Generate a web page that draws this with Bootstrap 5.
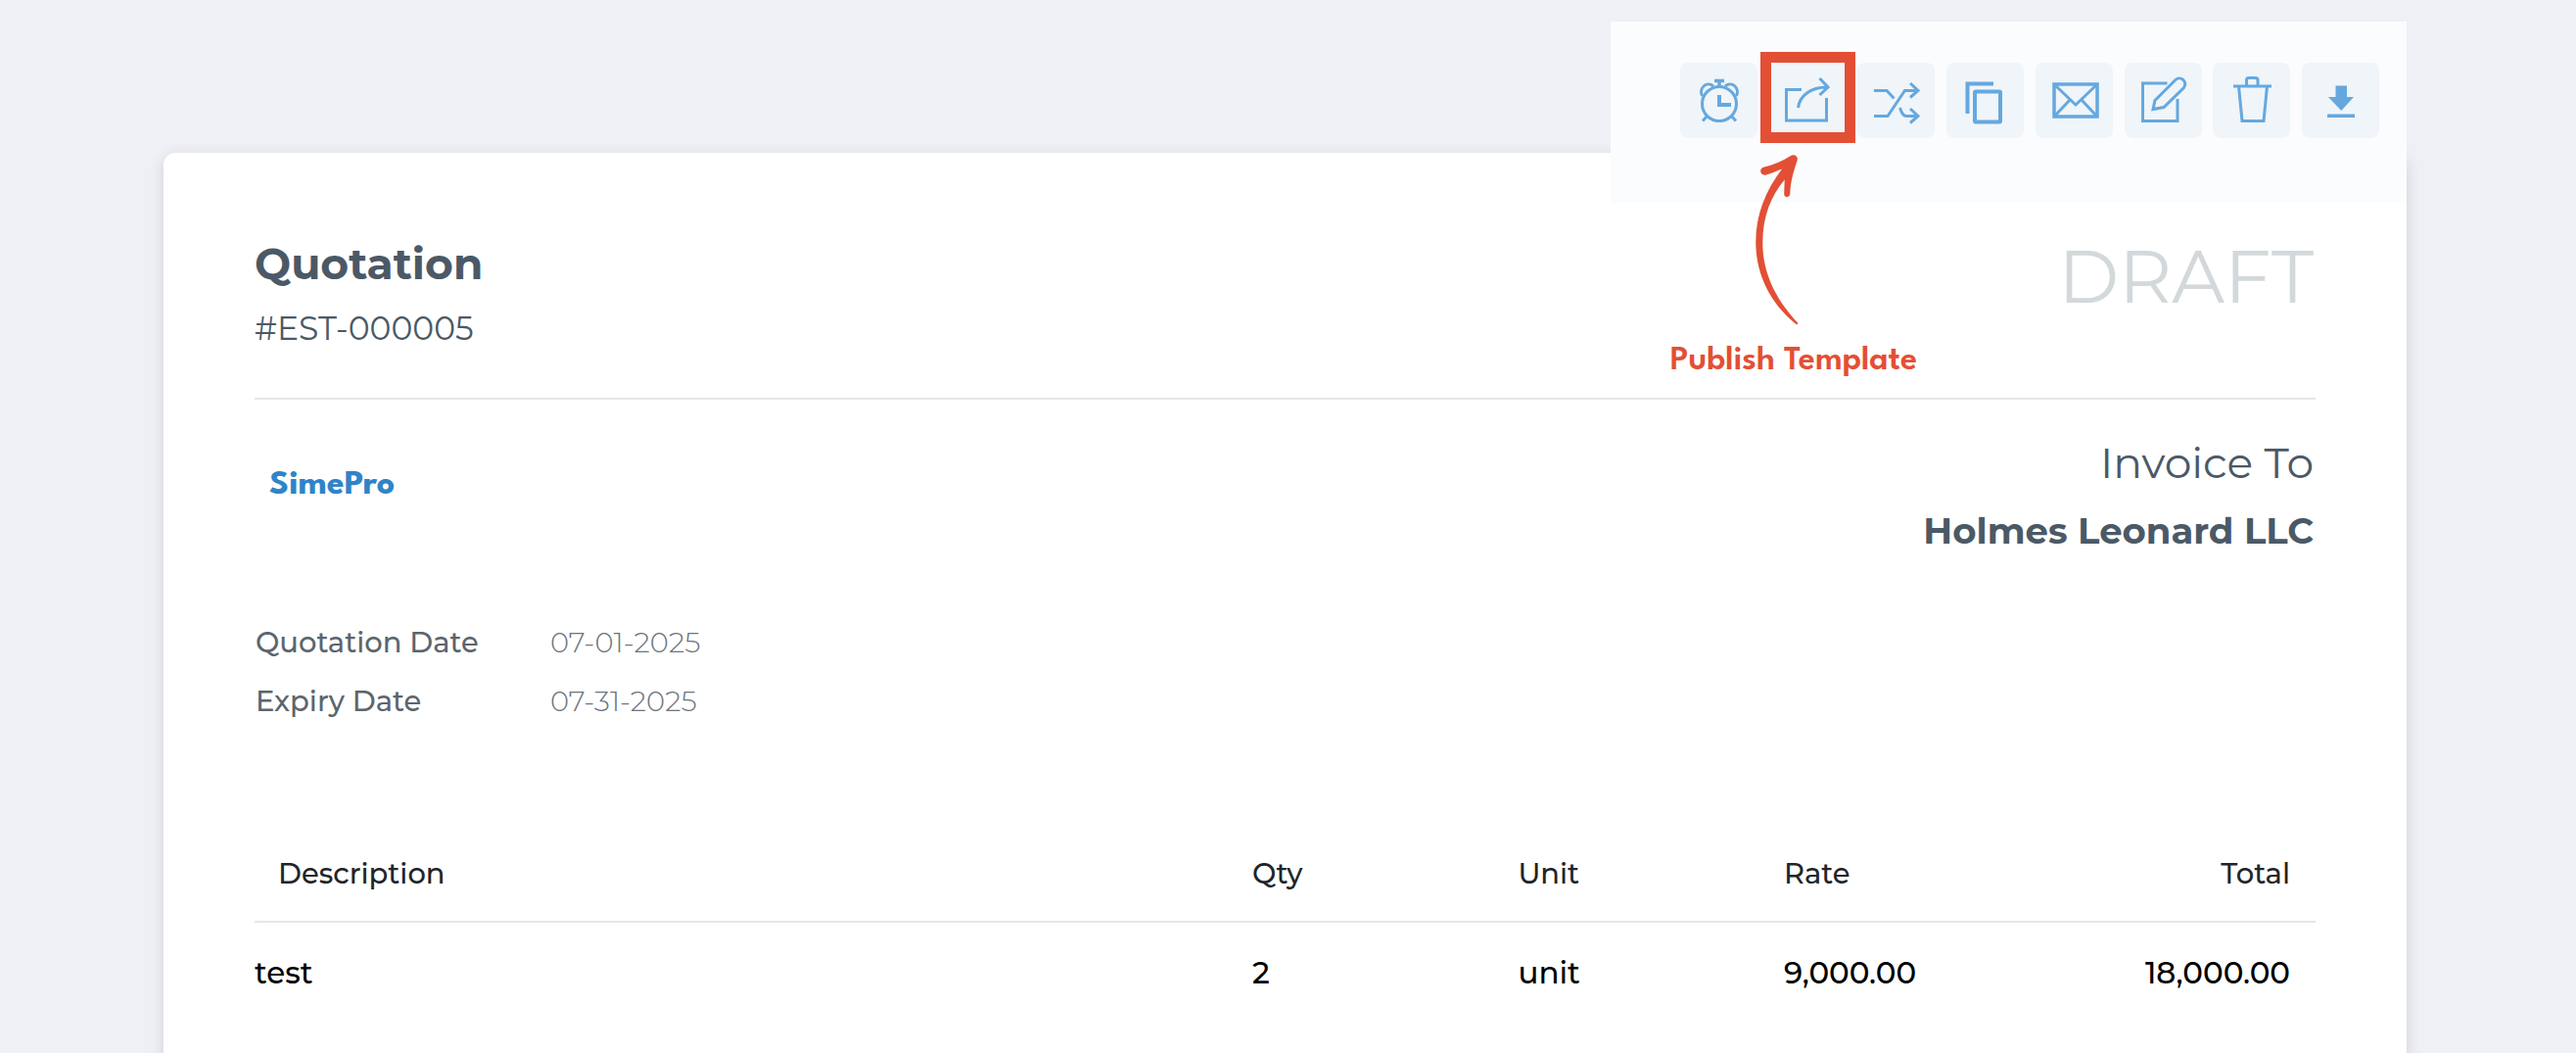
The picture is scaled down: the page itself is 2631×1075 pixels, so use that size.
<!DOCTYPE html>
<html lang="en">
<head>
<meta charset="utf-8">
<meta name="viewport" content="width=device-width, initial-scale=1">
<title>Quotation</title>
<link href="https://cdn.jsdelivr.net/npm/bootstrap@5.3.0/dist/css/bootstrap.min.css" rel="stylesheet">
<style>
  body { background: #eff0f5; color: #4b5966; font-family: Montserrat, Inter, "Open Sans", sans-serif; overflow-x: hidden; }
  .page-wrap { padding: 22px 173px 0 167px; }
  .tool-strip { width: 813px; height: 185px; padding: 42px 28px 0 71px; background: #fbfcfe; z-index: 2; }
  .tool-btn { width: 79px; height: 77px; border: 0; border-radius: 8px; background: #eff5f9; color: #66a8de; padding: 0; }
  .tool-btn svg { display: block; width: 79px; height: 77px; fill: none; stroke: currentColor; stroke-width: 3; }
  .hot-box { position: absolute; left: -9px; top: -11px; width: 97px; height: 93px; border: 11px solid #e34f35; pointer-events: none; }
  .hot-arrow { position: absolute; left: -20px; top: 91px; width: 60px; height: 180px; fill: #e34f35; pointer-events: none; }
  .hot-label { position: absolute; left: -101px; top: 283px; color: #e34f35; font: 600 35px/44px "League Spartan", Lato, sans-serif; white-space: nowrap; }
  .sheet { margin-top: -51px; min-height: 940px; padding: 84px 93px 0; border: 0; border-radius: 12px; box-shadow: 0 4px 14px rgba(60, 64, 80, .18); color: inherit; }
  .doc-title { font-size: 44px; line-height: 58px; font-weight: 700; margin: 0; }
  .doc-number { font-size: 33px; line-height: 60px; font-weight: 400; margin: 7px 0 0; }
  .doc-status { font-size: 75px; line-height: 84px; font-weight: 400; color: #d3d8db; padding-right: 2px; }
  .doc-head { height: 168px; border-bottom: 2px solid #e6e6e6; }
  .company { font: 700 36px/44px "League Spartan", Lato, sans-serif; color: #2f84c8; padding: 66px 0 0 15px; }
  .bill-to { padding: 34px 2px 0 0; }
  .to-label { font-size: 44px; line-height: 60px; font-weight: 400; }
  .to-name { font-size: 37px; line-height: 60px; font-weight: 700; margin-top: 10px; }
  .meta-list { font-size: 29px; line-height: 60px; margin: 54px 0 0 1px; color: #5c656d; }
  .meta-list dt { width: 301px; font-weight: 500; }
  .meta-list dd { font-weight: 300; margin: 0; color: #6d747c; }
  .item-table { margin: 98px 0 0; font-size: 29px; line-height: 40px; table-layout: fixed; }
  .item-table > :not(caption) > * > * { padding: 28px 0; border: 0; background: none; }
  .item-table > thead > tr > th { font-weight: 500; color: #212529; border-bottom: 2px solid #e6e6e6; }
  .item-table > tbody > tr > td { padding-top: 31px; font-size: 31px; font-weight: 500; color: #000; }
  .item-table > thead > tr > th:first-child { padding-left: 24px; }
  .item-table > :not(caption) > * > :last-child { padding-right: 26px; }
</style>
</head>
<body>
<div class="page-wrap">
  <div class="tool-strip position-relative d-flex justify-content-between align-items-start ms-auto">
    <button class="tool-btn" type="button" aria-label="Reminder">
      <svg viewBox="0 0 79 77"><circle cx="40" cy="42" r="17.5"/><path d="M22.500 34C19 26 27 18 34 24M57.500 34C61 26 53 18 46 24M23 59.500L28 54M57 59.500L52 54" stroke-width="3"/><path d="M35 18.500h10M40 18v7" stroke-width="3.5"/><path d="M40 33v10h12" stroke-width="4"/></svg>
    </button>
    <div class="tool-slot-hot position-relative">
      <button class="tool-btn" type="button" aria-label="Publish">
        <svg viewBox="0 0 79 77"><path d="M33 27.500H17.500V59H58.500V36M29.500 46C31 34 42 25 59 25M51.500 16L60 25L51.500 33"/></svg>
      </button>
      <span class="hot-box"></span>
      <svg class="hot-arrow" viewBox="0 0 60 180" aria-hidden="true"><path d="M14 15.800C24 13.500 34 9.500 42 4C46 1.500 50 5 48.600 9C44 22 41.500 33 41.300 43C41 47 35 47 35.200 43L35.700 28.500C22 45 13.500 65 13.300 92C13 125 28 152 49.500 175L48 176.500C25 158 6.600 130 6.300 93C6 65 16 40 33 17.500C28 19.500 22 22 17 23.600C11 25 9 17.500 14 15.800Z"/></svg>
      <div class="hot-label">Publish Template</div>
    </div>
    <button class="tool-btn" type="button" aria-label="Shuffle">
      <svg viewBox="0 0 79 77"><path d="M17 28.500H30L37.500 36.500M17 54.500H31L48.500 28.500H62M54 21L62 28.500L54 35.500M43.500 46C45 51 47 54.500 50 54.500H62M54 47L62 54.500L54 61.500"/></svg>
    </button>
    <button class="tool-btn" type="button" aria-label="Duplicate">
      <svg viewBox="0 0 79 77"><path d="M48 21.500H21.500V52" stroke-width="4"/><rect x="29" y="29.500" width="26" height="31" rx="1" stroke-width="4"/></svg>
    </button>
    <button class="tool-btn" type="button" aria-label="Email">
      <svg viewBox="0 0 79 77"><rect x="19" y="22" width="44" height="33" stroke-width="3.5"/><path d="M20 23L41 43L62 23M20 54L35 38M62 54L47 38"/></svg>
    </button>
    <button class="tool-btn" type="button" aria-label="Edit">
      <svg viewBox="0 0 79 77"><path d="M43.500 21H18.500V59.500H54V37M29 47.500L31 38.500L52 17.500C57 13 64.500 19 60.500 25.500L40 45.500Z"/></svg>
    </button>
    <button class="tool-btn" type="button" aria-label="Delete">
      <svg viewBox="0 0 79 77"><path d="M21 24H60M34.500 24V18Q34.500 15.500 37 15.500H43.500Q46 15.500 46 18V24M26.500 24L30 59.500H52L55.500 24"/></svg>
    </button>
    <button class="tool-btn" type="button" aria-label="Download">
      <svg viewBox="0 0 79 77"><path d="M34.500 23.500H46V35H53L40.300 49L27 35H34.500ZM26 52.500H54V56H26Z" fill="currentColor" stroke="none"/></svg>
    </button>
  </div>
  <main class="sheet card">
    <div class="doc-head d-flex justify-content-between">
      <div><h1 class="doc-title">Quotation</h1><p class="doc-number">#EST-000005</p></div>
      <div class="doc-status">DRAFT</div>
    </div>
    <div class="d-flex justify-content-between">
      <div class="company">SimePro</div>
      <div class="bill-to text-end"><div class="to-label">Invoice To</div><div class="to-name">Holmes Leonard LLC</div></div>
    </div>
    <dl class="meta-list">
      <div class="d-flex"><dt>Quotation Date</dt><dd>07-01-2025</dd></div>
      <div class="d-flex"><dt>Expiry Date</dt><dd>07-31-2025</dd></div>
    </dl>
    <table class="table item-table">
      <colgroup><col><col style="width:12.9%"><col style="width:12.9%"><col style="width:12.9%"><col style="width:12.9%"></colgroup>
      <thead><tr><th>Description</th><th>Qty</th><th>Unit</th><th>Rate</th><th class="text-end">Total</th></tr></thead>
      <tbody><tr><td>test</td><td>2</td><td>unit</td><td>9,000.00</td><td class="text-end">18,000.00</td></tr></tbody>
    </table>
  </main>
</div>
<script src="https://cdn.jsdelivr.net/npm/bootstrap@5.3.0/dist/js/bootstrap.bundle.min.js"></script>
</body>
</html>
